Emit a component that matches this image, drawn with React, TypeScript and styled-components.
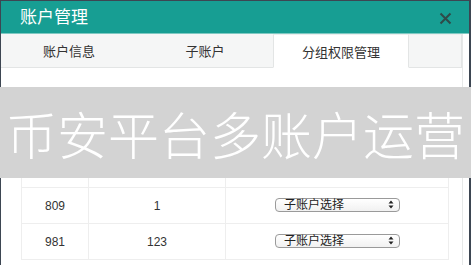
import React, { FunctionComponent } from 'react';
import styled, { createGlobalStyle } from 'styled-components';

const GlobalStyle = createGlobalStyle`
  html, body {
    margin: 0;
    padding: 0;
    background: #3d4652;
    font-family: "Liberation Sans", "Noto Sans CJK SC", sans-serif;
  }
  * {
    box-sizing: border-box;
  }
`;

interface TabProps {
  active?: boolean;
  grow?: boolean;
}

const rows = [
  { id: '', count: '' },
  { id: '', count: '' },
  { id: '809', count: '1' },
  { id: '981', count: '123' },
];

const App: FunctionComponent = () => {
  const tabs = ['账户信息', '子账户', '分组权限管理'];

  return (
    <>
      <GlobalStyle />
      <Screen>
        <Dialog>
          <Header>
            <Title>账户管理</Title>
            <Close>
              <svg width="13" height="13" viewBox="0 0 13 13">
                <path d="M1.5 1.5 L11.5 11.5 M11.5 1.5 L1.5 11.5" stroke="#2f4a48" strokeWidth="2" />
              </svg>
            </Close>
          </Header>
          <Body>
            <Panel>
              <TabBar>
                {tabs.map((t, i) => (
                  <Tab key={t} active={i === 2}>
                    {t}
                  </Tab>
                ))}
                <Tab grow />
              </TabBar>
              <Content>
                <Table>
                  <tbody>
                    {rows.map((r, i) => (
                      <Row key={i}>
                        <Cell width={67}>{r.id}</Cell>
                        <Cell width={137}>{r.count}</Cell>
                        <Cell>
                          {r.id && (
                            <Select>
                              <span>子账户选择</span>
                              <Arrows>
                                <svg width="6" height="9" viewBox="0 0 6 9">
                                  <path d="M3 0.5 L5.5 3.5 L0.5 3.5 Z M3 8.5 L5.5 5.5 L0.5 5.5 Z" fill="#222" />
                                </svg>
                              </Arrows>
                            </Select>
                          )}
                        </Cell>
                      </Row>
                    ))}
                  </tbody>
                </Table>
              </Content>
            </Panel>
          </Body>
        </Dialog>
        <Banner>币安平台多账户运营</Banner>
      </Screen>
    </>
  );
};

const Screen = styled.div`
  position: relative;
  width: 471px;
  height: 265px;
  padding: 1px 2px 0 1px;
  overflow: hidden;
`;

const Dialog = styled.div`
  width: 468px;
  height: 264px;
  background: #fff;
  display: flex;
  flex-direction: column;
`;

const Header = styled.div`
  height: 33px;
  background: #179e93;
  display: flex;
  align-items: center;
  justify-content: space-between;
  padding: 0 17px 0 19px;
  border-bottom: 1px solid #7fc9c2;
`;

const Title = styled.div`
  color: #fff;
  font-size: 17px;
  line-height: 1;
`;

const Close = styled.div`
  display: flex;
  align-items: center;
  padding-top: 2px;
`;

const Body = styled.div`
  flex: 1;
  padding-right: 6px;
  display: flex;
`;

const Panel = styled.div`
  flex: 1;
  border-right: 1px solid #e6e8e8;
  display: flex;
  flex-direction: column;
`;

const TabBar = styled.div`
  display: flex;
  height: 34px;
  background: #fff;
`;

const Tab = styled.div<TabProps>`
  width: ${(p) => (p.grow ? 'auto' : '136px')};
  flex: ${(p) => (p.grow ? '1' : 'none')};
  display: flex;
  align-items: center;
  justify-content: center;
  font-size: 13px;
  color: #333;
  background: ${(p) => (p.active ? '#fff' : '#f5f6f6')};
  border-bottom: 1px solid ${(p) => (p.active ? '#fff' : '#e3e5e5')};
  border-left: ${(p) => (p.active ? '1px solid #e3e5e5' : 'none')};
  border-right: ${(p) => (p.active || p.grow ? '1px solid #e3e5e5' : 'none')};
  border-top: ${(p) => (p.active || p.grow ? '1px solid #eceeee' : 'none')};
`;

const Content = styled.div`
  flex: 1;
  padding: 47px 13px 0 20px;
`;

const Table = styled.table`
  width: 428px;
  border-collapse: collapse;
  table-layout: fixed;
`;

const Row = styled.tr`
  height: 36px;
`;

const Cell = styled.td<{ width?: number }>`
  width: ${(p) => (p.width ? `${p.width}px` : 'auto')};
  border: 1px solid #eeeeee;
  text-align: center;
  font-size: 12px;
  color: #333;
  padding: 0;
`;

const Select = styled.div`
  display: inline-flex;
  align-items: center;
  justify-content: space-between;
  width: 125px;
  height: 14px;
  padding: 0 5px 0 8px;
  border: 1px solid #9a9a9a;
  border-radius: 4px;
  background: linear-gradient(#ffffff, #f1f1f1);
  font-size: 12px;
  color: #222;
  vertical-align: middle;
  margin-bottom: 2px;
  margin-left: 1px;

  span {
    line-height: 12px;
  }
`;

const Arrows = styled.span`
  display: flex;
  align-items: center;
`;

const Banner = styled.div`
  position: absolute;
  left: 0;
  top: 87px;
  width: 471px;
  height: 91px;
  background: #d3d3d3;
  color: #fff;
  font-family: "Noto Sans CJK SC", sans-serif;
  font-weight: 300;
  font-size: 51px;
  display: flex;
  align-items: center;
  justify-content: center;
  white-space: nowrap;
`;

export default App;
